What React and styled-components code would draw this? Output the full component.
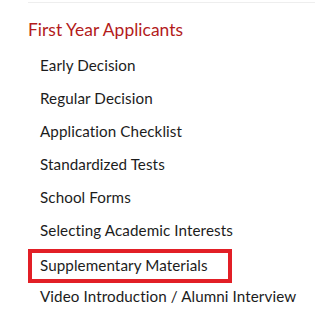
import React from "react";
import styled, { createGlobalStyle } from "styled-components";

const Global = createGlobalStyle`
  html, body { margin: 0; padding: 0; background: #fff; }
  body { font-family: Lato, "Open Sans", sans-serif; }
`;

const Nav = styled.nav`
  width: 335px;
  height: 323px;
  padding-left: 28px;
  box-sizing: border-box;
  overflow: hidden;
`;

const Rule = styled.div`
  margin-top: 2px;
  height: 1px;
  width: 287px;
  background: #eeeeee;
`;

const Heading = styled.h2`
  margin: 16px 0 0;
  font-size: 17.4px;
  font-weight: 400;
  letter-spacing: 0.04px;
  line-height: 22px;
  color: #b31b1b;
`;

const List = styled.ul`
  list-style: none;
  margin: 7px 0 0;
  padding: 0;
`;

const Item = styled.li`
  height: 33px;
  display: flex;
  align-items: center;
`;

const Link = styled.a`
  display: inline-flex;
  align-items: center;
  box-sizing: border-box;
  font-size: 15.2px;
  letter-spacing: 0.09px;
  color: #1c1c1c;
  text-decoration: none;
  padding-left: 12px;
  ${(p) =>
    p.$highlighted &&
    `
    align-self: flex-start;
    height: 34px;
    width: 204px;
    margin-top: 3px;
    padding: 0 0 3px 8px;
    border: 4px solid #e21f26;
  `}
`;

const items = [
  "Early Decision",
  "Regular Decision",
  "Application Checklist",
  "Standardized Tests",
  "School Forms",
  "Selecting Academic Interests",
  "Supplementary Materials",
  "Video Introduction / Alumni Interview",
];

export default function App() {
  return (
    <>
      <Global />
      <Nav>
        <Rule />
        <Heading>First Year Applicants</Heading>
        <List>
          {items.map((t) => (
            <Item key={t}>
              <Link href="#" $highlighted={t === "Supplementary Materials"}>
                {t}
              </Link>
            </Item>
          ))}
        </List>
      </Nav>
    </>
  );
}
